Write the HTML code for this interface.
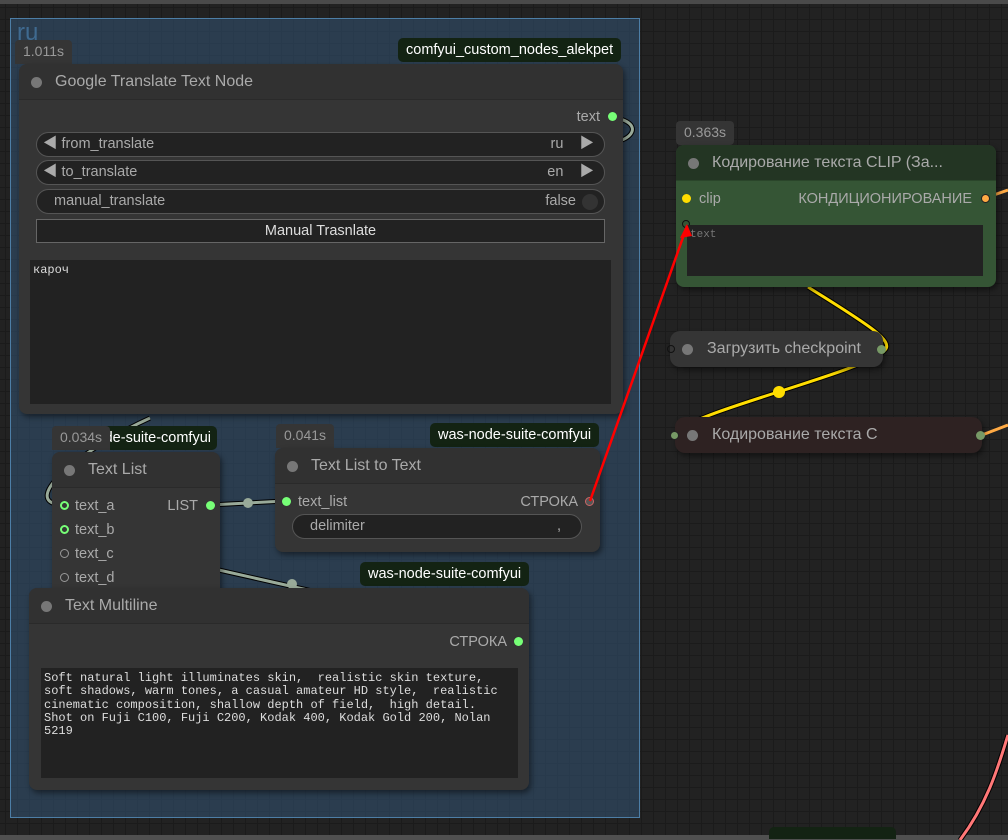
<!DOCTYPE html>
<html><head><meta charset="utf-8"><style>
*{margin:0;padding:0;box-sizing:border-box}
body{width:1008px;height:840px;overflow:hidden;background:#222;position:relative;font-family:"Liberation Sans","Noto Sans CJK SC",sans-serif;color:#aaa}
.grid{position:absolute;left:0;top:0;width:1008px;height:840px;
background-image:linear-gradient(#1b1b1b 1px,transparent 1px),linear-gradient(90deg,#1b1b1b 1px,transparent 1px);background-size:12px 12px;background-position:5px 7px}
.abs{position:absolute}
.group{left:10px;top:18px;width:630px;height:800px;background:rgba(50,80,110,.6);border:1px solid #4d7ea6}
.badge{position:absolute;background:#353535;color:#999;font-size:14px;line-height:22px;padding:0 8px;border-radius:4px 4px 0 0}
.tag{position:absolute;background:#132313;color:#fff;font-size:14.5px;line-height:24px;padding:0 8px;border-radius:5px;white-space:nowrap;overflow:hidden}
.node{position:absolute;background:#353535;border-radius:8px;box-shadow:2px 3px 6px rgba(0,0,0,.45)}
.title{position:absolute;left:0;right:0;top:0;height:36px;background:#313131;border-radius:8px 8px 0 0;border-bottom:1px solid #2a2a2a;color:#aaa;font-size:16px;line-height:36px;padding-left:36px}
.title:before{content:"";position:absolute;left:12px;top:13px;width:11px;height:11px;border-radius:50%;background:#777}
.dot{position:absolute;width:9px;height:9px;border-radius:50%;background:#7f7}
.lbl{position:absolute;font-size:14.5px;color:#aaa}
.pill{position:absolute;background:#222;border:1px solid #555;border-radius:13px;font-size:14.5px;color:#aaa;line-height:22px}
.ta{position:absolute;background:#222;font-family:"Liberation Mono",monospace;font-size:12px;color:#ddd;line-height:13.3px;padding:4px 3px;white-space:pre}
</style></head><body>
<div class="grid"></div>
<div class="abs" style="left:0;top:0;width:1008px;height:4px;background:#4a4a4a"></div>
<div class="abs" style="left:0;top:835px;width:1008px;height:5px;background:#505050"></div>
<div class="abs group"></div>
<div class="abs" style="left:17px;top:20px;font-size:24px;color:#3f6a90;line-height:26px">ru</div>
<svg class="abs" style="left:0;top:0" width="1008" height="840">
<path d="M612 117 C640 122 635 135 622 140" stroke="#000" stroke-width="5" fill="none"/>
<path d="M612 117 C640 122 635 135 622 140" stroke="#9a9" stroke-width="3" fill="none"/>
<path d="M150 418 C80 450 20 500 60 505" stroke="#000" stroke-width="5" fill="none"/>
<path d="M150 418 C80 450 20 500 60 505" stroke="#9a9" stroke-width="3" fill="none"/>
<path d="M210 505 L285 501" stroke="#000" stroke-width="5" fill="none"/>
<path d="M210 505 L285 501" stroke="#9a9" stroke-width="3" fill="none"/>
<circle cx="248" cy="503" r="5" fill="#9a9"/>
<path d="M210 568 L330 595" stroke="#000" stroke-width="5" fill="none"/>
<path d="M210 568 L330 595" stroke="#9a9" stroke-width="3" fill="none"/>
<circle cx="292" cy="584" r="5" fill="#9a9"/>
<path d="M808 287 C860 320 895 340 885 350 C870 370 700 410 680 430" stroke="#000" stroke-width="5" fill="none"/>
<path d="M808 287 C860 320 895 340 885 350 C870 370 700 410 680 430" stroke="#fd0" stroke-width="3" fill="none"/>
<circle cx="779" cy="392" r="6" fill="#fd0"/>
<path d="M985 198 L1008 190" stroke="#fa4" stroke-width="3" fill="none"/>
<path d="M982 435 L1008 425" stroke="#fa4" stroke-width="3" fill="none"/>
<path d="M960 840 C990 800 1000 760 1008 735" stroke="#000" stroke-width="5" fill="none"/>
<path d="M960 840 C990 800 1000 760 1008 735" stroke="#f77" stroke-width="3" fill="none"/>
</svg>

<div class="badge" style="left:15px;top:40px;height:24px">1.011s</div>
<div class="tag" style="left:398px;top:38px">comfyui_custom_nodes_alekpet</div>
<div class="node" style="left:19px;top:64px;width:604px;height:350px">
<div class="title">Google Translate Text Node</div>
<div class="lbl" style="right:23px;top:45px">text</div>
<div class="dot" style="left:589px;top:48px"></div>
<div class="pill" style="left:17px;top:68px;width:569px;height:25px"><span style="padding-left:6px">◀ from_translate</span><span style="position:absolute;right:10px">ru &nbsp;&nbsp;&nbsp;▶</span></div>
<div class="pill" style="left:17px;top:96px;width:569px;height:25px"><span style="padding-left:6px">◀ to_translate</span><span style="position:absolute;right:10px">en &nbsp;&nbsp;&nbsp;▶</span></div>
<div class="pill" style="left:17px;top:125px;width:569px;height:25px"><span style="padding-left:17px">manual_translate</span><span style="position:absolute;right:28px">false</span><span style="position:absolute;right:6px;top:4px;width:16px;height:16px;border-radius:50%;background:#333"></span></div>
<div class="abs" style="left:17px;top:155px;width:569px;height:24px;background:#222;border:1px solid #666;color:#ddd;font-size:14.5px;text-align:center;line-height:22px">Manual Trasnlate</div>
<div class="ta" style="left:11px;top:196px;width:581px;height:144px">кароч</div>
</div>

<div class="tag" style="left:52px;top:426px;width:165px;text-align:right;padding:0 6px 0 0">was-node-suite-comfyui</div>
<div class="badge" style="left:52px;top:426px;height:24px;background:#353535">0.034s</div>
<div class="node" style="left:52px;top:452px;width:168px;height:150px">
<div class="title">Text List</div>
<div class="dot" style="left:8px;top:49px;background:none;border:2px solid #7f7"></div>
<div class="lbl" style="left:23px;top:46px">text_a</div>
<div class="lbl" style="right:22px;top:46px">LIST</div>
<div class="dot" style="left:154px;top:49px"></div>
<div class="dot" style="left:8px;top:73px;background:none;border:2px solid #7f7"></div>
<div class="lbl" style="left:23px;top:70px">text_b</div>
<div class="dot" style="left:8px;top:97px;background:none;border:1px solid #999"></div>
<div class="lbl" style="left:23px;top:94px">text_c</div>
<div class="dot" style="left:8px;top:121px;background:none;border:1px solid #999"></div>
<div class="lbl" style="left:23px;top:118px">text_d</div>
</div>

<div class="badge" style="left:276px;top:424px;height:24px">0.041s</div>
<div class="tag" style="left:430px;top:423px">was-node-suite-comfyui</div>
<div class="node" style="left:275px;top:448px;width:325px;height:104px">
<div class="title">Text List to Text</div>
<div class="dot" style="left:7px;top:49px"></div>
<div class="lbl" style="left:23px;top:46px">text_list</div>
<div class="lbl" style="right:22px;top:46px">СТРОКА</div>
<div class="dot" style="left:310px;top:49px;background:#555;border:1px solid #c66"></div>
<div class="pill" style="left:17px;top:66px;width:290px;height:25px"><span style="padding-left:17px">delimiter</span><span style="position:absolute;right:20px">,</span></div>
</div>

<div class="tag" style="left:360px;top:562px">was-node-suite-comfyui</div>
<div class="node" style="left:29px;top:588px;width:500px;height:202px">
<div class="title">Text Multiline</div>
<div class="lbl" style="right:22px;top:46px">СТРОКА</div>
<div class="dot" style="left:485px;top:49px"></div>
<div class="ta" style="left:12px;top:80px;width:477px;height:110px">Soft natural light illuminates skin,  realistic skin texture,
soft shadows, warm tones, a casual amateur HD style,  realistic
cinematic composition, shallow depth of field,  high detail.
Shot on Fuji C100, Fuji C200, Kodak 400, Kodak Gold 200, Nolan
5219</div>
</div>

<div class="badge" style="left:676px;top:121px;height:24px;border-radius:4px">0.363s</div>
<div class="node" style="left:676px;top:145px;width:320px;height:142px;background:#355535">
<div class="title" style="background:#233523;border-bottom:1px solid #2a452a">Кодирование текста CLIP (За...</div>
<div class="dot" style="left:6px;top:49px;background:#fd0"></div>
<div class="lbl" style="left:23px;top:46px">clip</div>
<div class="lbl" style="right:24px;top:46px">КОНДИЦИОНИРОВАНИЕ</div>
<div class="dot" style="left:305px;top:49px;background:#fa4;border:1px solid #222"></div>
<div class="dot" style="left:6px;top:75px;width:8px;height:8px;background:none;border:1px solid #111"></div>
<div class="ta" style="left:11px;top:80px;width:296px;height:51px;color:#777;font-size:11px">text</div>
</div>

<div class="node" style="left:670px;top:331px;width:213px;height:36px;border-radius:10px">
<div class="title" style="border:0;background:none;padding-left:37px">Загрузить checkpoint</div>
<div class="dot" style="left:207px;top:14px;background:#796"></div>
</div>
<div class="abs" style="left:667px;top:345px;width:8px;height:8px;border:1px solid #111;border-radius:50%"></div>

<div class="node" style="left:675px;top:417px;width:307px;height:36px;background:#2e2222;border-radius:10px">
<div class="title" style="border:0;background:none;padding-left:37px">Кодирование текста C</div>
<div class="dot" style="left:301px;top:14px;background:#796"></div>
<div class="dot" style="left:-5px;top:14px;background:#796;border:1px solid #222"></div>
</div>

<svg class="abs" style="left:0;top:0" width="1008" height="840">
<path d="M590 501 L687 226" stroke="#f00" stroke-width="2.5" fill="none"/>
<path d="M687 224 L680 238 L692 236 Z" fill="#f00"/>
</svg>

<div class="tag" style="left:769px;top:827px;width:127px;height:12px;border-radius:5px 5px 0 0"></div>
</body></html>
